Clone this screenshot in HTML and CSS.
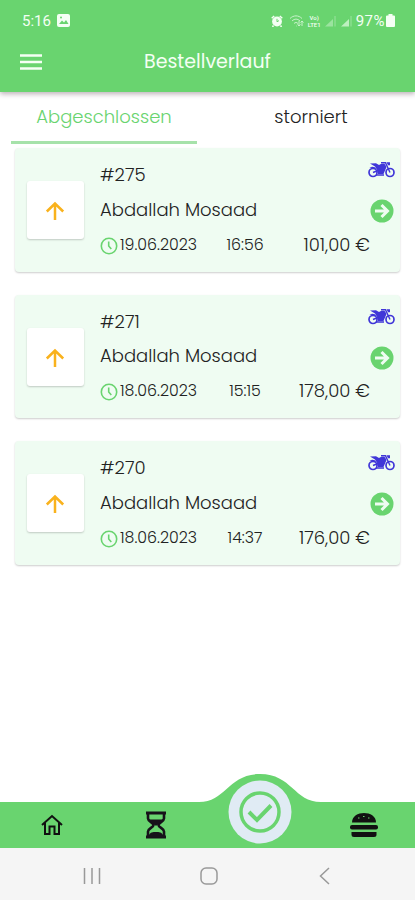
FILE: index.html
```
<!DOCTYPE html>
<html lang="de">
<head>
    <meta charset="utf-8">
    <meta name="viewport" content="width=device-width, initial-scale=1">
    <title>Bestellverlauf</title>
    <link rel="stylesheet" href="styles.css">
</head>
<body>
<!-- shared icons -->
<svg class="symbols" width="0" height="0">
    <symbol id="up" viewBox="0 0 20 20">
        <path d="M10 19V3M1.800 10.500L10 2.500l8.200 8" fill="none" stroke="#f9b21d" stroke-width="2.5"/>
    </symbol>
    <symbol id="clock" viewBox="0 0 18 18">
        <circle cx="9" cy="9" r="7.7" fill="none" stroke="#69d46f" stroke-width="1.6"/>
        <path d="M8.7 4.5V9l2.6 3" fill="none" stroke="#69d46f" stroke-width="1.6"/>
    </symbol>
    <symbol id="bike" viewBox="0 0 27 17">
        <g fill="none" stroke="#4036d8">
            <circle cx="5" cy="11.5" r="4" stroke-width="1.7"/>
            <circle cx="22" cy="11.5" r="4" stroke-width="1.7"/>
            <path d="M5 11.5l5-2M22 11.5L17.5 1.8H13M8 14h8" stroke-width="1.4"/>
        </g>
        <path d="M2 2.500l6-.3 3 1.800c2-1.200 4-1.500 6-.7l1.500 2.700-3 7H10L9 8.500 7 5.500z" fill="#4036d8"/>
        <path d="M1.500 6.500C4 5 7 5.500 9 8M18.500 1.200h3.500v3h-2z" fill="#4036d8"/>
    </symbol>
    <symbol id="go" viewBox="0 0 24 24">
        <circle cx="12" cy="12" r="11.500" fill="#69d46f"/>
        <path d="M5 12h12M11.500 6l6 6-6 6" fill="none" stroke="#effcf2" stroke-width="3"/>
    </symbol>
</svg>

<header class="header">
    <div class="status">
        <span class="clock">5:16</span>
        <svg class="picture" width="13" height="13" viewBox="0 0 13 13">
            <rect width="13" height="13" rx="2" fill="#f4fff4"/>
            <path d="M2 10l3-3.500 2 2L9 6l2.500 4z" fill="#69d46f"/>
            <circle cx="4" cy="3.500" r="1" fill="#69d46f"/>
        </svg>
        <svg class="alarm" width="12" height="12" viewBox="0 0 12 12">
            <circle cx="6" cy="6.500" r="4.900" fill="#f4fff4"/>
            <path d="M.7 3.200L3.200 1M11.300 3.200L8.800 1M2.500 10.500L1.500 12M9.500 10.500l1 1.500" stroke="#f4fff4" stroke-width="1.500"/>
            <path d="M6 3.800v3l2-1.200" fill="none" stroke="#69d46f"/>
        </svg>
        <svg class="wifi" width="16" height="13" viewBox="0 0 16 13" fill="none" stroke="#c9f2cb">
            <path d="M1 4.500C4.500 1 9.500 1 13 4.500M3 7c2.500-2.500 5.500-2.500 8 0M5 9.500c1.300-1.300 2.700-1.300 4 0"/>
            <path d="M7 12h.5M10 7v5M8.500 10.500L10 12l1.500-1.500M13 12V7M11.500 8.500L13 7l1.500 1.500"/>
        </svg>
        <span class="volte"><span>Vo)</span><span>LTE1</span></span>
        <svg class="signal" width="29" height="12" viewBox="0 0 29 12">
            <path d="M1 11.500L9 4v7.500z" fill="#9be39f"/>
            <path d="M11 11.500V1" stroke="#9be39f"/>
            <path d="M17 11.500l8-7.500v7.500z" fill="#bdf0bf"/>
            <path d="M27 11.500V1" stroke="#9be39f"/>
        </svg>
        <span class="percent">97%</span>
        <svg width="9" height="13" viewBox="0 0 9 13"><path d="M2.500 0h4v1.500H8q1 0 1 1V12q0 1-1 1H1q-1 0-1-1V2.500q0-1 1-1h1.500z" fill="#f4fff4"/></svg>
    </div>
    <div class="appbar">
        <svg class="menu" width="22" height="16" viewBox="0 0 22 16"><path d="M0 1.500h22M0 8h22M0 14.500h22" stroke="#f4fff4" stroke-width="2.400"/></svg>
        <h1>Bestellverlauf</h1>
    </div>
</header>

<nav class="tabs">
    <div class="tab active"><span>Abgeschlossen</span></div>
    <div class="tab"><span>storniert</span></div>
</nav>

<main class="orders">
    <div class="order">
        <div class="thumb"><svg width="20" height="20"><use href="#up"/></svg></div>
        <div class="info">
            <div class="number">#275</div>
            <div class="name">Abdallah Mosaad</div>
            <div class="details">
                <svg width="18" height="18"><use href="#clock"/></svg>
                <span class="date">19.06.2023</span>
                <span class="time">16:56</span>
                <span class="price">101,00 €</span>
            </div>
        </div>
        <div class="actions">
            <svg width="27" height="17"><use href="#bike"/></svg>
            <svg width="24" height="24"><use href="#go"/></svg>
        </div>
    </div>
    <div class="order">
        <div class="thumb"><svg width="20" height="20"><use href="#up"/></svg></div>
        <div class="info">
            <div class="number">#271</div>
            <div class="name">Abdallah Mosaad</div>
            <div class="details">
                <svg width="18" height="18"><use href="#clock"/></svg>
                <span class="date">18.06.2023</span>
                <span class="time">15:15</span>
                <span class="price">178,00 €</span>
            </div>
        </div>
        <div class="actions">
            <svg width="27" height="17"><use href="#bike"/></svg>
            <svg width="24" height="24"><use href="#go"/></svg>
        </div>
    </div>
    <div class="order">
        <div class="thumb"><svg width="20" height="20"><use href="#up"/></svg></div>
        <div class="info">
            <div class="number">#270</div>
            <div class="name">Abdallah Mosaad</div>
            <div class="details">
                <svg width="18" height="18"><use href="#clock"/></svg>
                <span class="date">18.06.2023</span>
                <span class="time">14:37</span>
                <span class="price">176,00 €</span>
            </div>
        </div>
        <div class="actions">
            <svg width="27" height="17"><use href="#bike"/></svg>
            <svg width="24" height="24"><use href="#go"/></svg>
        </div>
    </div>
</main>

<nav class="bottom">
    <div class="item">
        <svg width="22" height="22" viewBox="0 0 22 22" fill="none" stroke="#111" stroke-width="2">
            <path d="M1 11L11 2l10 9M4 9v11h4.500v-7.500h5V20H18V9"/>
        </svg>
    </div>
    <div class="item">
        <svg width="22" height="28" viewBox="0 0 22 28">
            <path d="M1 2h20M1 26h20" stroke="#17121a" stroke-width="3"/>
            <path d="M3 3v4.500c0 3 5.500 4 5.500 6.500S3 17.500 3 20.500V25h16v-4.500c0-3-5.500-4-5.500-6.500S19 10.500 19 7.500V3" fill="none" stroke="#17121a" stroke-width="2.600"/>
            <path d="M4 8.500h14L12 14.500H10zM4 24.500C5 21 8 21 11 21s6 0 7 3.500z" fill="#17121a"/>
        </svg>
    </div>
    <div class="item">
        <!-- raised part of the bar -->
        <svg class="hump" width="122" height="74" viewBox="0 0 122 74">
            <path d="M0 28C27 28 29 0 61 0s34 28 61 28v46H0z" fill="#69d46f"/>
            <circle cx="61" cy="38" r="31.500" fill="#e0ebf4"/>
            <circle cx="61" cy="38" r="19" fill="none" stroke="#69d46f" stroke-width="3.500"/>
            <path d="M50 38l8 8 14-14.500" fill="none" stroke="#69d46f" stroke-width="4"/>
        </svg>
    </div>
    <div class="item">
        <svg width="28" height="24" viewBox="0 0 28 24" fill="#111">
            <path d="M2 9.500C2 3 8 0 14 0s12 3 12 9.500z"/>
            <rect x="0" y="12" width="28" height="4.500" rx="2"/>
            <path d="M1.500 19h25v2.500q0 2.500-2.500 2.500H4q-2.500 0-2.500-2.500z"/>
            <path d="M8 5h1.500M13 3.500h1.500M18 5h1.500" stroke="#69d46f" stroke-width="1"/>
        </svg>
    </div>
</nav>

<footer class="system">
    <svg width="18" height="18" viewBox="0 0 18 18"><path d="M1.500 1v16M9 1v16M16.500 1v16" stroke="#999" stroke-width="1.500"/></svg>
    <svg width="18" height="18" viewBox="0 0 18 18"><rect x="1" y="1" width="16" height="16" rx="5" fill="none" stroke="#999" stroke-width="1.500"/></svg>
    <svg width="18" height="18" viewBox="0 0 18 18"><path d="M13 1L4.500 9l8.500 8" fill="none" stroke="#999" stroke-width="1.500"/></svg>
</footer>
</body>
</html>
```
FILE: styles.css
```
* {
    box-sizing: border-box;
}
body {
    display: flex;
    flex-direction: column;
    height: 900px;
    margin: 0;
    font-family: Poppins, Inter, sans-serif;
    font-weight: 300;
    color: #222;
    background-color: #fff;
    overflow: hidden;
}
svg {
    display: block;
    flex: none;
}
.symbols {
    position: absolute;
}
.header {
    height: 92px;
    background-color: #69d46f;
    color: #f4fff4;
    box-shadow: 0 2px 5px rgba(60, 30, 50, 0.35);
}
.status {
    display: flex;
    align-items: center;
    height: 40px;
    padding: 1px 20px 0 22px;
    font-family: Roboto, sans-serif;
    font-size: 15px;
    font-weight: 400;
}
.picture {
    margin-left: 6px;
}
.alarm {
    margin-left: auto;
}
.wifi {
    margin-left: 6px;
}
.volte {
    width: 15px;
    margin: 0 2px 0 2px;
    font-size: 6px;
    font-weight: 500;
    line-height: 7px;
    text-align: center;
}
.volte span {
    display: block;
}
.percent {
    margin: 0 1px 0 3px;
    font-size: 15px;
    letter-spacing: 0.5px;
}
.appbar {
    display: flex;
    align-items: center;
    height: 43px;
    padding-left: 20px;
}
.appbar h1 {
    margin: 0 0 0 102px;
    font-size: 19px;
    font-weight: 400;
}
.tabs {
    display: flex;
    height: 52px;
    padding: 0 11px;
    font-size: 18px;
}
.tab {
    display: flex;
    justify-content: center;
    width: 186px;
    padding-top: 11px;
}
.tab.active {
    color: #69d46f;
    border-bottom: 3px solid #a6e2aa;
}
.tab + .tab {
    width: 207px;
    padding-left: 21px;
}
.orders {
    flex: 1;
    padding: 4px 15px 0;
}
.order {
    display: flex;
    height: 123.5px;
    margin-bottom: 23px;
    padding-left: 12px;
    background-color: #effcf2;
    border-radius: 4px;
    box-shadow: 0 1px 2px rgba(0, 0, 0, 0.2);
}
.thumb {
    display: flex;
    align-items: center;
    justify-content: center;
    width: 57px;
    height: 58px;
    margin-top: 33px;
    padding: 2px 2px 0 0;
    background-color: #fff;
    border-radius: 3px;
    box-shadow: 0 1px 2px rgba(0, 0, 0, 0.2);
}
.info {
    width: 270px;
    margin-left: 16px;
    padding-top: 10px;
    font-size: 18px;
}
.number, .name {
    height: 34.5px;
    line-height: 34px;
}
.details {
    display: flex;
    align-items: center;
    height: 34px;
}
.details svg {
    margin: 3px 2px 0 0;
}
.date, .time {
    font-size: 15.8px;
}
.date {
    width: 77px;
}
.time {
    width: 96px;
    text-align: center;
}
.price {
    flex: 1;
    text-align: right;
    white-space: nowrap;
}
.actions {
    display: flex;
    flex-direction: column;
    align-items: center;
    width: 27px;
    margin-left: -2px;
    padding-top: 13px;
    gap: 21px;
}
.bottom {
    display: flex;
    height: 46px;
    background-color: #69d46f;
}
.item {
    position: relative;
    display: flex;
    align-items: center;
    justify-content: center;
    width: 104px;
    padding-left: 1px;
}
.hump {
    position: absolute;
    bottom: 0;
    left: -9px;
}
.system {
    display: flex;
    align-items: center;
    justify-content: space-between;
    height: 52px;
    padding: 4px 81px 0 83px;
    background-color: #f5f5f5;
}
```
